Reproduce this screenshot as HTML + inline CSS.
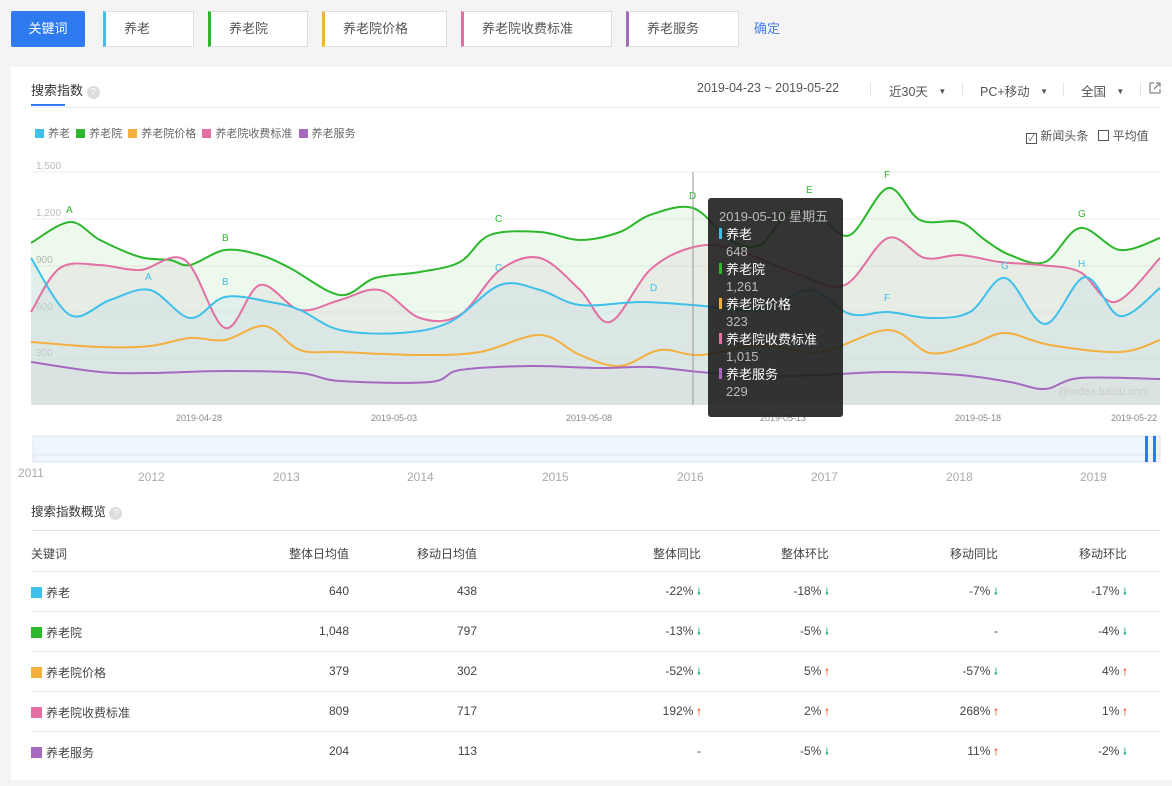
<!DOCTYPE html>
<html><head><meta charset="utf-8"><style>
*{margin:0;padding:0;box-sizing:border-box}
body{width:1172px;height:786px;background:#f4f4f4;font-family:"Liberation Sans","Noto Sans CJK SC",sans-serif;color:#333;position:relative;overflow:hidden;font-size:12px}
.abs{position:absolute}
.kw{position:absolute;top:11px;height:36px;background:#fff;border:1px solid #ddd;font-size:13px;color:#555;line-height:34px;padding-left:18px}
.panel{position:absolute;left:11px;top:67px;width:1161px;height:713px;background:#fff}
.row{position:absolute;left:31px;width:1130px;height:40px;border-top:1px solid #e8e8e8}
.c{position:absolute;top:12px;font-size:12px;color:#444;white-space:nowrap}
.sq{display:inline-block;width:11px;height:11px;margin-right:4px;vertical-align:-1px}
.dn{color:#1aa77a;font-size:10px}
.up{color:#f06b4c;font-size:10px}
</style></head><body>
<div class="abs" style="left:11px;top:11px;width:74px;height:36px;background:#2e7bf0;border-radius:2px;color:#fff;font-size:13px;line-height:36px;text-align:center">关键词</div>
<div class="kw" style="left:103px;width:91px;border-left:3px solid #3fc0ea">养老</div>
<div class="kw" style="left:208px;width:100px;border-left:3px solid #2cb72c">养老院</div>
<div class="kw" style="left:322px;width:125px;border-left:3px solid #f4b03e">养老院价格</div>
<div class="kw" style="left:461px;width:151px;border-left:3px solid #e36fa3">养老院收费标准</div>
<div class="kw" style="left:626px;width:113px;border-left:3px solid #a56ac0">养老服务</div>
<div class="abs" style="left:754px;top:18px;color:#4a7ee8;font-size:13px">确定</div>
<div class="panel"></div>
<div class="abs" style="left:31px;top:80px;font-size:13px;color:#333">搜索指数 <span style="display:inline-block;width:13px;height:13px;border-radius:50%;background:#ddd;color:#fff;font-size:10px;text-align:center;line-height:13px">?</span></div>
<div class="abs" style="left:31px;top:104px;width:34px;height:2px;background:#2e7bf0"></div>
<div class="abs" style="left:31px;top:107px;width:1130px;height:1px;background:#eaeaea"></div>
<div class="abs" style="left:697px;top:81px;font-size:12.5px;color:#555">2019-04-23 ~ 2019-05-22</div>
<div class="abs" style="left:870px;top:82px;width:1px;height:14px;background:#e4e4e4"></div>
<div class="abs" style="left:889px;top:81px;font-size:12.5px;color:#555">近30天 &nbsp;&nbsp;<span style="font-size:8px;vertical-align:2px">▼</span></div>
<div class="abs" style="left:962px;top:82px;width:1px;height:14px;background:#e4e4e4"></div>
<div class="abs" style="left:980px;top:81px;font-size:12.5px;color:#555">PC+移动 &nbsp;&nbsp;<span style="font-size:8px;vertical-align:2px">▼</span></div>
<div class="abs" style="left:1063px;top:82px;width:1px;height:14px;background:#e4e4e4"></div>
<div class="abs" style="left:1081px;top:81px;font-size:12.5px;color:#555">全国 &nbsp;&nbsp;<span style="font-size:8px;vertical-align:2px">▼</span></div>
<div class="abs" style="left:1140px;top:82px;width:1px;height:14px;background:#e4e4e4"></div>
<svg class="abs" style="left:1148px;top:81px" width="14" height="14"><path d="M6 2H2v10h10V8M8 2h4v4M12 2L6 8" stroke="#888" fill="none" stroke-width="1.3"/></svg>
<div class="abs" style="left:35px;top:125px;font-size:11px;color:#666">
<span class="sq" style="background:#3fc0ea;width:9px;height:9px"></span>养老 &nbsp;<span class="sq" style="background:#2cb72c;width:9px;height:9px"></span>养老院 &nbsp;<span class="sq" style="background:#f4b03e;width:9px;height:9px"></span>养老院价格 &nbsp;<span class="sq" style="background:#e36fa3;width:9px;height:9px"></span>养老院收费标准 &nbsp;<span class="sq" style="background:#a56ac0;width:9px;height:9px"></span>养老服务</div>
<div class="abs" style="left:1026px;top:127px;font-size:12px;color:#555"><span style="display:inline-block;width:11px;height:11px;border:1px solid #555;font-size:9px;line-height:9px;text-align:center;vertical-align:-1px">✓</span> 新闻头条 &nbsp;&nbsp;<span style="display:inline-block;width:11px;height:11px;border:1px solid #555;vertical-align:-1px"></span> 平均值</div>
<svg class="abs" style="left:0;top:0" width="1172" height="495">
<g font-size="10" fill="#bbb"><text x="36" y="169">1,500</text><text x="36" y="216">1,200</text><text x="36" y="263">900</text><text x="36" y="310">600</text><text x="36" y="356">300</text></g>
<g stroke="#eee"><line x1="31" y1="172" x2="1160" y2="172"/><line x1="31" y1="219" x2="1160" y2="219"/><line x1="31" y1="266" x2="1160" y2="266"/><line x1="31" y1="312" x2="1160" y2="312"/><line x1="31" y1="359" x2="1160" y2="359"/></g>
<g id="areas"></g>
<g id="lines" fill="none" stroke-width="2"></g>
<g font-size="10" fill="#2cb72c"><text x="66" y="213">A</text><text x="222" y="241">B</text><text x="495" y="222">C</text><text x="689" y="199">D</text><text x="806" y="193">E</text><text x="884" y="178">F</text><text x="1078" y="217">G</text></g>
<g font-size="10" fill="#3fc0ea"><text x="145" y="280">A</text><text x="222" y="285">B</text><text x="495" y="271">C</text><text x="650" y="291">D</text><text x="884" y="301">F</text><text x="1001" y="269">G</text><text x="1078" y="267">H</text></g>
<line x1="693" y1="172" x2="693" y2="405" stroke="#999"/>
<text x="1058" y="395" font-size="11" fill="#ccc">@index.baidu.com</text>
<g font-size="9" fill="#888"><text x="176" y="421">2019-04-28</text><text x="371" y="421">2019-05-03</text><text x="566" y="421">2019-05-08</text><text x="760" y="421">2019-05-13</text><text x="955" y="421">2019-05-18</text><text x="1111" y="421">2019-05-22</text></g>
<rect x="33" y="436" width="1127" height="26" fill="#eef5fc" stroke="#dde6ee"/>
<line x1="33" y1="455" x2="1160" y2="455" stroke="#dde6ee"/>
<rect x="1145" y="436" width="3" height="26" fill="#2e7bf0"/><rect x="1153" y="436" width="3" height="26" fill="#2e7bf0"/>
<g font-size="12" fill="#aaa"><text x="18" y="477">2011</text><text x="138" y="481">2012</text><text x="273" y="481">2013</text><text x="407" y="481">2014</text><text x="542" y="481">2015</text><text x="677" y="481">2016</text><text x="811" y="481">2017</text><text x="946" y="481">2018</text><text x="1080" y="481">2019</text></g>
</svg>
<script>
var S=[
["#2cb72c","rgba(44,183,44,.08)","31,243 70,222 100,240 140,257 170,260 190,265 225,250 260,255 290,268 340,295 375,278 420,272 460,262 490,235 540,232 580,240 620,232 650,215 693,208 730,240 760,245 790,212 820,218 850,235 888,188 920,220 960,222 985,240 1010,255 1045,262 1080,228 1120,250 1160,238"],
["#e36fa3","rgba(216,210,210,.3)","31,312 60,268 100,265 140,270 185,260 225,328 260,285 300,310 340,300 380,290 420,318 460,315 500,270 540,258 580,290 610,322 650,270 690,248 730,248 800,275 845,285 888,238 925,258 960,255 1000,262 1040,265 1080,272 1115,302 1160,258"],
["#3fc0ea","rgba(199,221,230,.35)","31,258 70,315 110,300 150,290 190,318 225,297 270,302 300,310 340,330 400,333 450,322 500,285 540,290 580,305 640,302 693,305 760,310 810,290 850,314 888,312 930,318 970,312 1005,278 1045,324 1085,277 1120,316 1160,288"],
["#f4b03e",null,"31,342 100,347 150,346 190,338 225,340 265,326 300,350 340,352 420,355 480,352 540,335 580,355 620,366 660,350 700,355 760,345 820,352 888,330 930,353 970,345 1005,333 1050,345 1120,352 1160,340"],
["#a56ac0","rgba(221,221,221,.35)","31,362 100,372 150,373 225,371 300,373 340,381 430,382 460,370 530,366 600,368 650,367 700,372 760,376 820,375 888,372 960,375 1010,382 1045,389 1080,378 1160,379"]];
var ns="http://www.w3.org/2000/svg",A=document.getElementById("areas"),L=document.getElementById("lines");
S.forEach(function(s){var p=s[2].split(" ").map(function(q){return q.split(",").map(Number)});
var d="M"+p[0][0]+","+p[0][1];
for(var i=0;i<p.length-1;i++){var p0=p[i-1]||p[i],p1=p[i],p2=p[i+1],p3=p[i+2]||p2;
var c1x=p1[0]+(p2[0]-p0[0])/6,c1y=p1[1]+(p2[1]-p0[1])/6,c2x=p2[0]-(p3[0]-p1[0])/6,c2y=p2[1]-(p3[1]-p1[1])/6;
d+=" C"+c1x+","+c1y+" "+c2x+","+c2y+" "+p2[0]+","+p2[1];}
if(s[1]){var a=document.createElementNS(ns,"path");a.setAttribute("d",d+" L1160,405 L31,405Z");a.setAttribute("fill",s[1]);A.appendChild(a);}
var l=document.createElementNS(ns,"path");l.setAttribute("d",d);l.setAttribute("stroke",s[0]);L.appendChild(l);});
</script>
<div class="abs" style="left:708px;top:198px;width:135px;height:219px;background:rgba(30,30,30,.9);border-radius:3px;padding:10px 0 0 11px;color:#fff;font-size:13px;line-height:17.5px">
<div style="color:#bbb">2019-05-10 星期五</div>
<div><span style="display:inline-block;width:3px;height:11px;background:#3fc0ea;margin-right:4px"></span>养老</div><div style="color:#bbb;padding-left:7px">648</div>
<div><span style="display:inline-block;width:3px;height:11px;background:#2cb72c;margin-right:4px"></span>养老院</div><div style="color:#bbb;padding-left:7px">1,261</div>
<div><span style="display:inline-block;width:3px;height:11px;background:#f4b03e;margin-right:4px"></span>养老院价格</div><div style="color:#bbb;padding-left:7px">323</div>
<div><span style="display:inline-block;width:3px;height:11px;background:#e36fa3;margin-right:4px"></span>养老院收费标准</div><div style="color:#bbb;padding-left:7px">1,015</div>
<div><span style="display:inline-block;width:3px;height:11px;background:#a56ac0;margin-right:4px"></span>养老服务</div><div style="color:#bbb;padding-left:7px">229</div>
</div>
<div class="abs" style="left:31px;top:501px;font-size:12.5px;color:#333">搜索指数概览 <span style="display:inline-block;width:13px;height:13px;border-radius:50%;background:#ddd;color:#fff;font-size:10px;text-align:center;line-height:13px">?</span></div>
<div class="row" style="top:530px;border-color:#e0e0e0">
<span class="c" style="left:0;top:14px">关键词</span><span class="c" style="right:812px;top:14px">整体日均值</span><span class="c" style="right:684px;top:14px">移动日均值</span><span class="c" style="right:460px;top:14px">整体同比</span><span class="c" style="right:332px;top:14px">整体环比</span><span class="c" style="right:163px;top:14px">移动同比</span><span class="c" style="right:34px;top:14px">移动环比</span></div>
<div class="row" style="top:571px"><span class="c" style="left:0"><span class="sq" style="background:#3fc0ea"></span>养老</span><span class="c" style="right:812px">640</span><span class="c" style="right:684px">438</span><span class="c" style="right:460px">-22% <span class="dn">🠗</span></span><span class="c" style="right:332px">-18% <span class="dn">🠗</span></span><span class="c" style="right:163px">-7% <span class="dn">🠗</span></span><span class="c" style="right:34px">-17% <span class="dn">🠗</span></span></div>
<div class="row" style="top:611px"><span class="c" style="left:0"><span class="sq" style="background:#2cb72c"></span>养老院</span><span class="c" style="right:812px">1,048</span><span class="c" style="right:684px">797</span><span class="c" style="right:460px">-13% <span class="dn">🠗</span></span><span class="c" style="right:332px">-5% <span class="dn">🠗</span></span><span class="c" style="right:163px">-</span><span class="c" style="right:34px">-4% <span class="dn">🠗</span></span></div>
<div class="row" style="top:651px"><span class="c" style="left:0"><span class="sq" style="background:#f4b03e"></span>养老院价格</span><span class="c" style="right:812px">379</span><span class="c" style="right:684px">302</span><span class="c" style="right:460px">-52% <span class="dn">🠗</span></span><span class="c" style="right:332px">5% <span class="up">🠕</span></span><span class="c" style="right:163px">-57% <span class="dn">🠗</span></span><span class="c" style="right:34px">4% <span class="up">🠕</span></span></div>
<div class="row" style="top:691px"><span class="c" style="left:0"><span class="sq" style="background:#e36fa3"></span>养老院收费标准</span><span class="c" style="right:812px">809</span><span class="c" style="right:684px">717</span><span class="c" style="right:460px">192% <span class="up">🠕</span></span><span class="c" style="right:332px">2% <span class="up">🠕</span></span><span class="c" style="right:163px">268% <span class="up">🠕</span></span><span class="c" style="right:34px">1% <span class="up">🠕</span></span></div>
<div class="row" style="top:731px"><span class="c" style="left:0"><span class="sq" style="background:#a56ac0"></span>养老服务</span><span class="c" style="right:812px">204</span><span class="c" style="right:684px">113</span><span class="c" style="right:460px">-</span><span class="c" style="right:332px">-5% <span class="dn">🠗</span></span><span class="c" style="right:163px">11% <span class="up">🠕</span></span><span class="c" style="right:34px">-2% <span class="dn">🠗</span></span></div>
</body></html>
